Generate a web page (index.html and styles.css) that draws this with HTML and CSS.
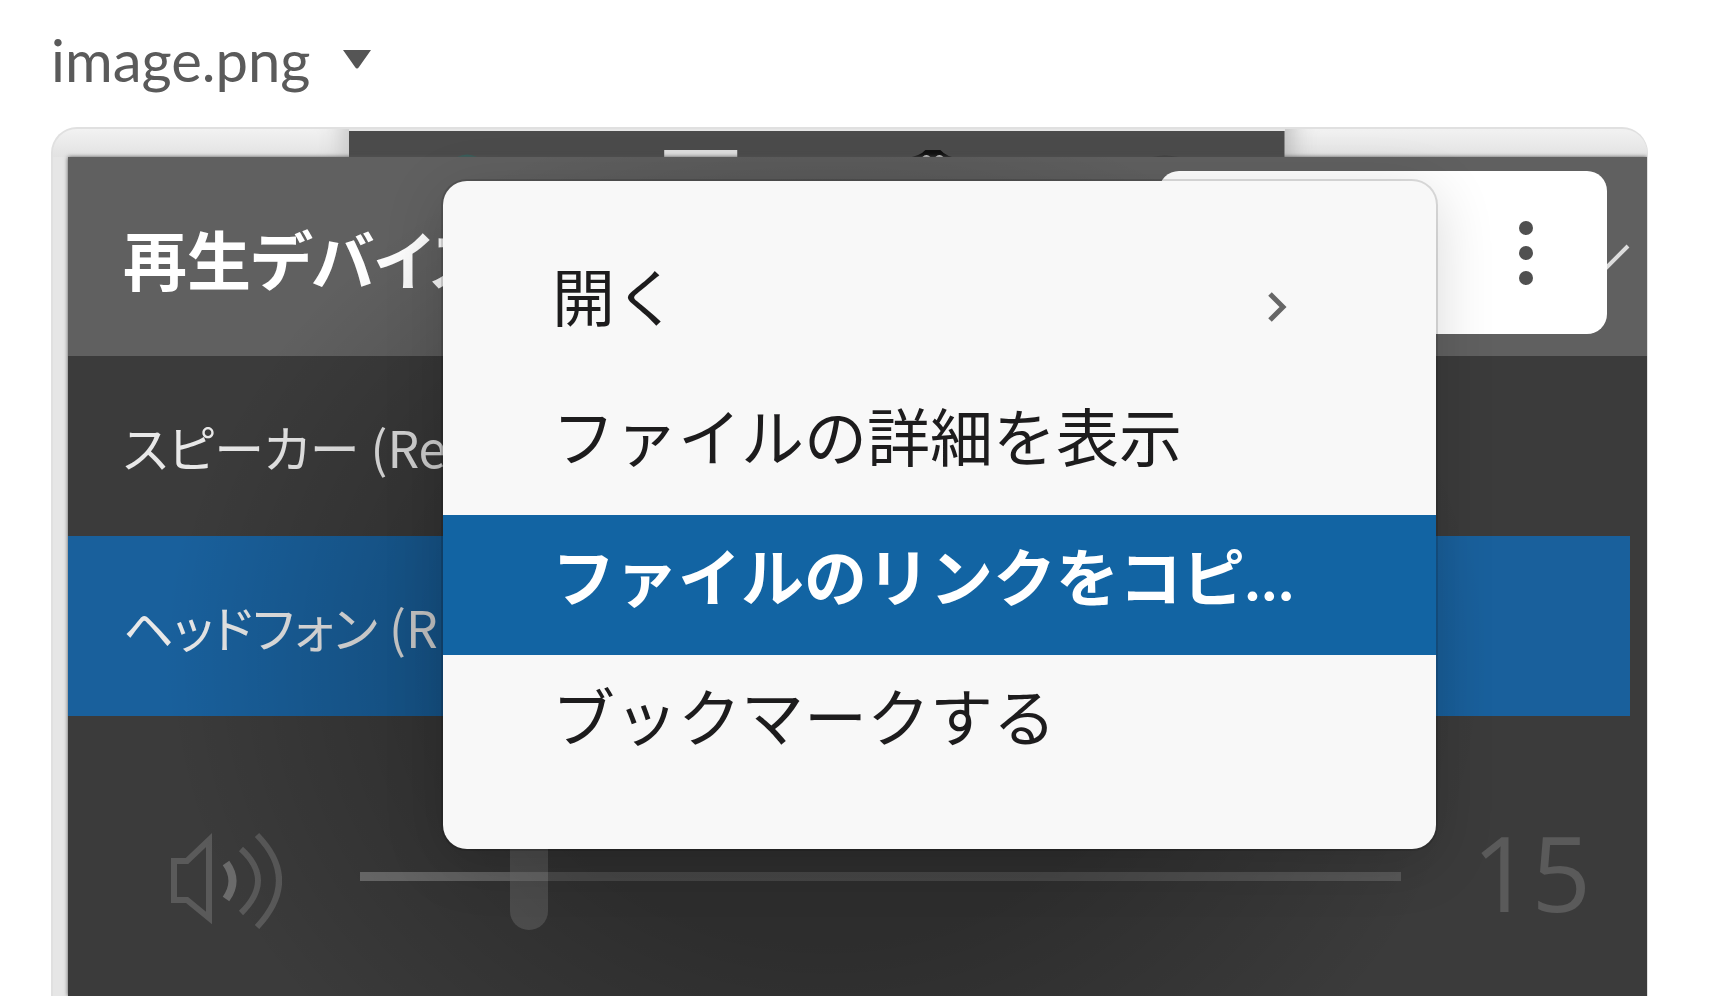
FILE: index.html
```html
<!DOCTYPE html>
<html lang="ja">
  <head>
    <meta charset="utf-8" />
    <meta name="viewport" content="width=device-width, initial-scale=1.0" />
    <link rel="stylesheet" href="styles.css">
    <title>image.png</title>
  </head>

  <body>
    <button class="file-name" type="button">
      image.png
      <svg class="caret" viewBox="0 0 28 19" aria-hidden="true"><path d="M0 0h28L16 17q-2 3-4 0z" /></svg>
    </button>

    <div class="preview">
      <!-- strip of the window behind the flyout -->
      <div class="backdrop">
        <div class="backdrop-light"></div>
        <svg class="backdrop-dark" viewBox="0 0 935 30" preserveAspectRatio="none" aria-hidden="true">
          <path d="M0 2h935v28H0z" fill="#4b4b4b" />
          <path d="M108 28q10-5 20 0z" fill="#31605c" />
          <path d="M315 21h73v9h-73z" fill="#dedede" />
          <path d="M557 29q14-2 19-8h15q6 7 18 8z" fill="#111" />
          <path d="M573 28q4-4 8 0zM586 28q4-4 8 0z" fill="#ddd" />
          <path d="M803 28q12-3 26 0z" fill="#3a3a3a" />
        </svg>
        <div class="backdrop-light backdrop-right"></div>
      </div>

      <div class="flyout">
        <div class="flyout-head">
          <span>再生デバイス</span>
          <svg class="collapse" viewBox="0 0 48 26" aria-hidden="true"><path d="M2 2l22 22L46 2" /></svg>
        </div>
        <div class="device">スピーカー (Re</div>
        <div class="device selected">ヘッドフォン (R</div>
        <div class="volume">
          <svg class="speaker" viewBox="0 -10 112 106" aria-hidden="true">
            <path d="M4 28h13L39 7v78L17 67H4z" />
            <path class="wave-near" d="M56 30q13 18 0 36" />
            <path d="M71 16q34 31 0 64" />
            <path d="M87 2q44 45 0 92" />
          </svg>
          <input class="slider" type="range" min="0" max="100" value="15" aria-label="音量" />
          <output class="level">15</output>
        </div>
      </div>

      <button class="actions" type="button" aria-label="その他">
        <svg viewBox="0 0 16 66" aria-hidden="true">
          <circle cx="8" cy="8" r="7" />
          <circle cx="8" cy="33" r="7" />
          <circle cx="8" cy="58" r="7" />
        </svg>
      </button>

      <div class="menu">
        <button class="menu-item" type="button">
          開く
          <svg class="chevron" viewBox="0 0 20 30" aria-hidden="true"><path d="M3 2l13 13L3 28" /></svg>
        </button>
        <button class="menu-item" type="button">ファイルの詳細を表示</button>
        <button class="menu-item active" type="button">ファイルのリンクをコピ…</button>
        <button class="menu-item" type="button">ブックマークする</button>
      </div>
    </div>
  </body>
</html>
```

FILE: styles.css
```css
* {
  box-sizing: border-box;
}

body {
  display: flex;
  flex-direction: column;
  min-height: 100vh;
  margin: 0;
  padding: 0 62px 0 51px;
  background: #fff;
  font-family: Lato, "Noto Sans CJK JP", sans-serif;
}

button {
  border: 0;
  font-family: inherit;
  text-align: left;
}

.file-name {
  display: flex;
  align-items: center;
  gap: 32px;
  align-self: flex-start;
  height: 127px;
  padding: 0 0 8px;
  background: none;
  color: #5a5a5a;
  font-size: 58px;
}

.caret {
  width: 28px;
  height: 19px;
  fill: #555;
}

.preview {
  position: relative;
  display: flex;
  flex-direction: column;
  flex: 1;
  overflow: hidden;
  padding-left: 15px;
  border: 2px solid #e0e0e0;
  border-width: 2px 1px 0 2px;
  border-radius: 26px 26px 0 0;
  background: #e6e6e6;
}

.backdrop {
  display: flex;
  height: 28px;
  margin-left: -15px;
}

.backdrop-light {
  flex: 296;
  background: linear-gradient(#f2f2f2, #e2e2e2);
  box-shadow: inset -30px 0 24px -24px #c4c4c4;
}

.backdrop-dark {
  flex: 935;
  min-width: 0;
  height: 30px;
}

.backdrop-right {
  flex: 362;
  box-shadow: inset 30px 0 24px -24px #b8b8b8;
}

.flyout {
  position: relative;
  flex: 1;
  background: #3b3b3b;
  box-shadow: 0 0 4px #555;
  color: #e8e8e8;
  font-family: "Noto Sans CJK JP", sans-serif;
  font-feature-settings: "palt";
  white-space: nowrap;
}

/* dims the flyout around the open menu */
.flyout::after {
  position: absolute;
  inset: 0;
  background: radial-gradient(ellipse 42% 67% at 48% 60%, rgba(0, 0, 0, 0.24) 50%, transparent);
  content: "";
  pointer-events: none;
}

.flyout-head {
  display: flex;
  align-items: center;
  justify-content: space-between;
  height: 199px;
  padding: 0 17px 0 55px;
  background: #606060;
  color: #fff;
  font-size: 64px;
  font-weight: 700;
}

.collapse {
  width: 48px;
  height: 26px;
  fill: none;
  stroke: #ddd;
  stroke-width: 4;
}

.device {
  height: 180px;
  padding-left: 55px;
  font-size: 50px;
  line-height: 180px;
}

.selected {
  margin-right: 17px;
  background: #19609c;
}

.volume {
  display: flex;
  align-items: center;
  padding: 106px 56px 0 102px;
}

.speaker {
  width: 112px;
  height: 106px;
  margin-right: 78px;
  fill: none;
  stroke: #5a5a5a;
  stroke-width: 6;
}

.speaker .wave-near {
  stroke: #6c6c6c;
  stroke-width: 8;
}

.slider {
  flex: 1;
  height: 108px;
  margin: 0;
  appearance: none;
  background: linear-gradient(to right, #707070 15%, #5a5a5a 16%) center / 100% 9px no-repeat;
}

.slider::-webkit-slider-thumb {
  appearance: none;
  width: 38px;
  height: 108px;
  border-radius: 19px;
  background: linear-gradient(#5a5a5a 50px, #787878 50px, #787878 59px, #5a5a5a 59px);
}

.level {
  width: 190px;
  padding-bottom: 8px;
  color: #5a5a5a;
  font-family: "Open Sans", sans-serif;
  font-size: 104px;
  line-height: 100px;
  text-align: right;
}

.actions {
  position: absolute;
  top: 42px;
  right: 40px;
  display: flex;
  align-items: center;
  justify-content: flex-end;
  width: 448px;
  height: 163px;
  padding: 0 73px;
  border-radius: 20px;
  background: #fff;
  fill: #505050;
}

.actions svg {
  width: 16px;
  height: 66px;
}

.menu {
  position: absolute;
  top: 52px;
  right: 211px;
  width: 993px;
  padding: 54px 0;
  overflow: hidden;
  border-radius: 24px;
  background: #f8f8f8;
  box-shadow: 0 0 0 2px rgba(0, 0, 0, 0.13), 0 12px 60px rgba(0, 0, 0, 0.16);
}

.menu-item {
  display: flex;
  align-items: center;
  justify-content: space-between;
  width: 100%;
  height: 140px;
  padding: 0 149px 16px 109px;
  background: none;
  color: #1d1c1d;
  font-size: 63px;
  line-height: 96px;
  white-space: nowrap;
}

.menu-item.active {
  background: #1264a3;
  color: #fff;
  font-weight: 700;
}

.chevron {
  width: 20px;
  height: 30px;
  margin-top: 20px;
  fill: none;
  stroke: #666;
  stroke-width: 5;
}
```
